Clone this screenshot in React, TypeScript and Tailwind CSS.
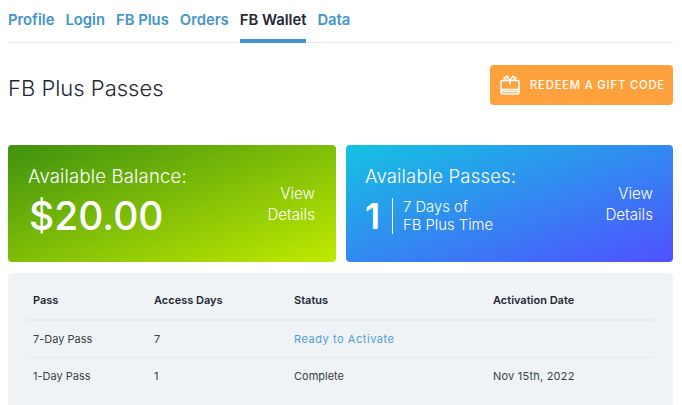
const navItems = ["Profile", "Login", "FB Plus", "Orders", "FB Wallet", "Data"];

const rows = [
  { pass: "7-Day Pass", days: "7", status: "Ready to Activate", date: "" },
  { pass: "1-Day Pass", days: "1", status: "Complete", date: "Nov 15th, 2022" },
];

function GiftIcon() {
  return (
    <svg width="20" height="20" viewBox="0 0 20 20" fill="none" stroke="white" strokeWidth="1.6" className="shrink-0">
      <rect x="1" y="5.5" width="18" height="13.5" rx="1.5" />
      <path d="M1 14.5h18M1 16.5h18" />
      <path d="M10 5.5 7 1.2 4.2 3 6.5 5.5M10 5.5 13 1.2 15.8 3 13.5 5.5" />
      <path d="M10 5.5v4" />
    </svg>
  );
}

function ViewDetails() {
  return (
    <div className="text-right text-[15.2px] leading-[21px] font-light">
      View
      <br />
      Details
    </div>
  );
}

export default function App() {
  return (
    <div className="w-[682px] h-[405px] overflow-hidden bg-white font-['Inter',sans-serif] pl-2 pr-[9px]">
      <nav className="flex gap-[11px] border-b border-[#e3e8ea] h-[43px] text-[14.8px] font-semibold text-[#4495ca]">
        {navItems.map((item) => (
          <span
            key={item}
            className={
              item === "FB Wallet"
                ? "pt-[9px] h-[43px] border-b-4 border-[#4495ca] text-[#232834]"
                : "pt-[9px]"
            }
          >
            {item}
          </span>
        ))}
      </nav>

      <div className="flex items-center justify-between h-[102px] pb-[12px]">
        <h1 className="text-[22px] font-light text-[#232834]">FB Plus Passes</h1>
        <button className="w-[183px] h-[40px] mb-[6px] bg-[#ffa13d] rounded flex items-center gap-[10px] pl-[10px] text-white text-[11.3px] font-medium tracking-[0.07em]">
          <GiftIcon />
          REDEEM A GIFT CODE
        </button>
      </div>

      <div className="flex gap-[10px] h-[117px]">
        <div className="w-[328px] rounded bg-[linear-gradient(to_bottom_right,#3f910f,#c0ea00)] text-white flex justify-between pl-5 pr-[21px] pt-[19px]">
          <div>
            <div className="text-[18.5px] font-light leading-[24px] tracking-[0.01em]">Available Balance:</div>
            <div className="text-[39px] font-medium leading-[50px] mt-[3px] pl-[1px]">$20.00</div>
          </div>
          <div className="pt-[19px]">
            <ViewDetails />
          </div>
        </div>
        <div className="flex-1 rounded bg-[linear-gradient(to_bottom_right,#14c3e2,#5050ff)] text-white flex justify-between pl-[19px] pr-[20px] pt-[19px]">
          <div>
            <div className="text-[18.5px] font-light leading-[24px] tracking-[0.01em]">Available Passes:</div>
            <div className="flex items-center mt-[10px]">
              <span className="text-[36px] font-semibold leading-[36px] w-[27px]">1</span>
              <div className="border-l border-white pl-[10px] text-[14.8px] font-light leading-[18px]">
                7 Days of
                <br />
                FB Plus Time
              </div>
            </div>
          </div>
          <div className="pt-[19px]">
            <ViewDetails />
          </div>
        </div>
      </div>

      <div className="mt-[11px] h-[160px] rounded-t bg-[#eff3f6] pt-[8px] px-5">
        <table className="w-full table-fixed text-[11px] text-[#3a3f48] border-collapse">
          <thead>
            <tr className="h-[39px] border-b-2 border-[#e4e8ea] text-[#232834]">
              <th className="w-[121px] text-left font-semibold px-[5px]">Pass</th>
              <th className="w-[140px] text-left font-semibold px-[5px]">Access Days</th>
              <th className="w-[199px] text-left font-semibold px-[5px]">Status</th>
              <th className="text-left font-semibold px-[5px]">Activation Date</th>
            </tr>
          </thead>
          <tbody>
            {rows.map((r, i) => (
              <tr key={r.pass} className={i === 0 ? "h-[37px] border-b border-[#e4e8ea]" : "h-[37px]"}>
                <td className="px-[5px]">{r.pass}</td>
                <td className="px-[5px]">{r.days}</td>
                <td className={r.status === "Ready to Activate" ? "px-[5px] text-[#4f9fd3] tracking-[0.05em]" : "px-[5px]"}>{r.status}</td>
                <td className="px-[5px] tracking-[0.02em]">{r.date}</td>
              </tr>
            ))}
          </tbody>
        </table>
      </div>
    </div>
  );
}
